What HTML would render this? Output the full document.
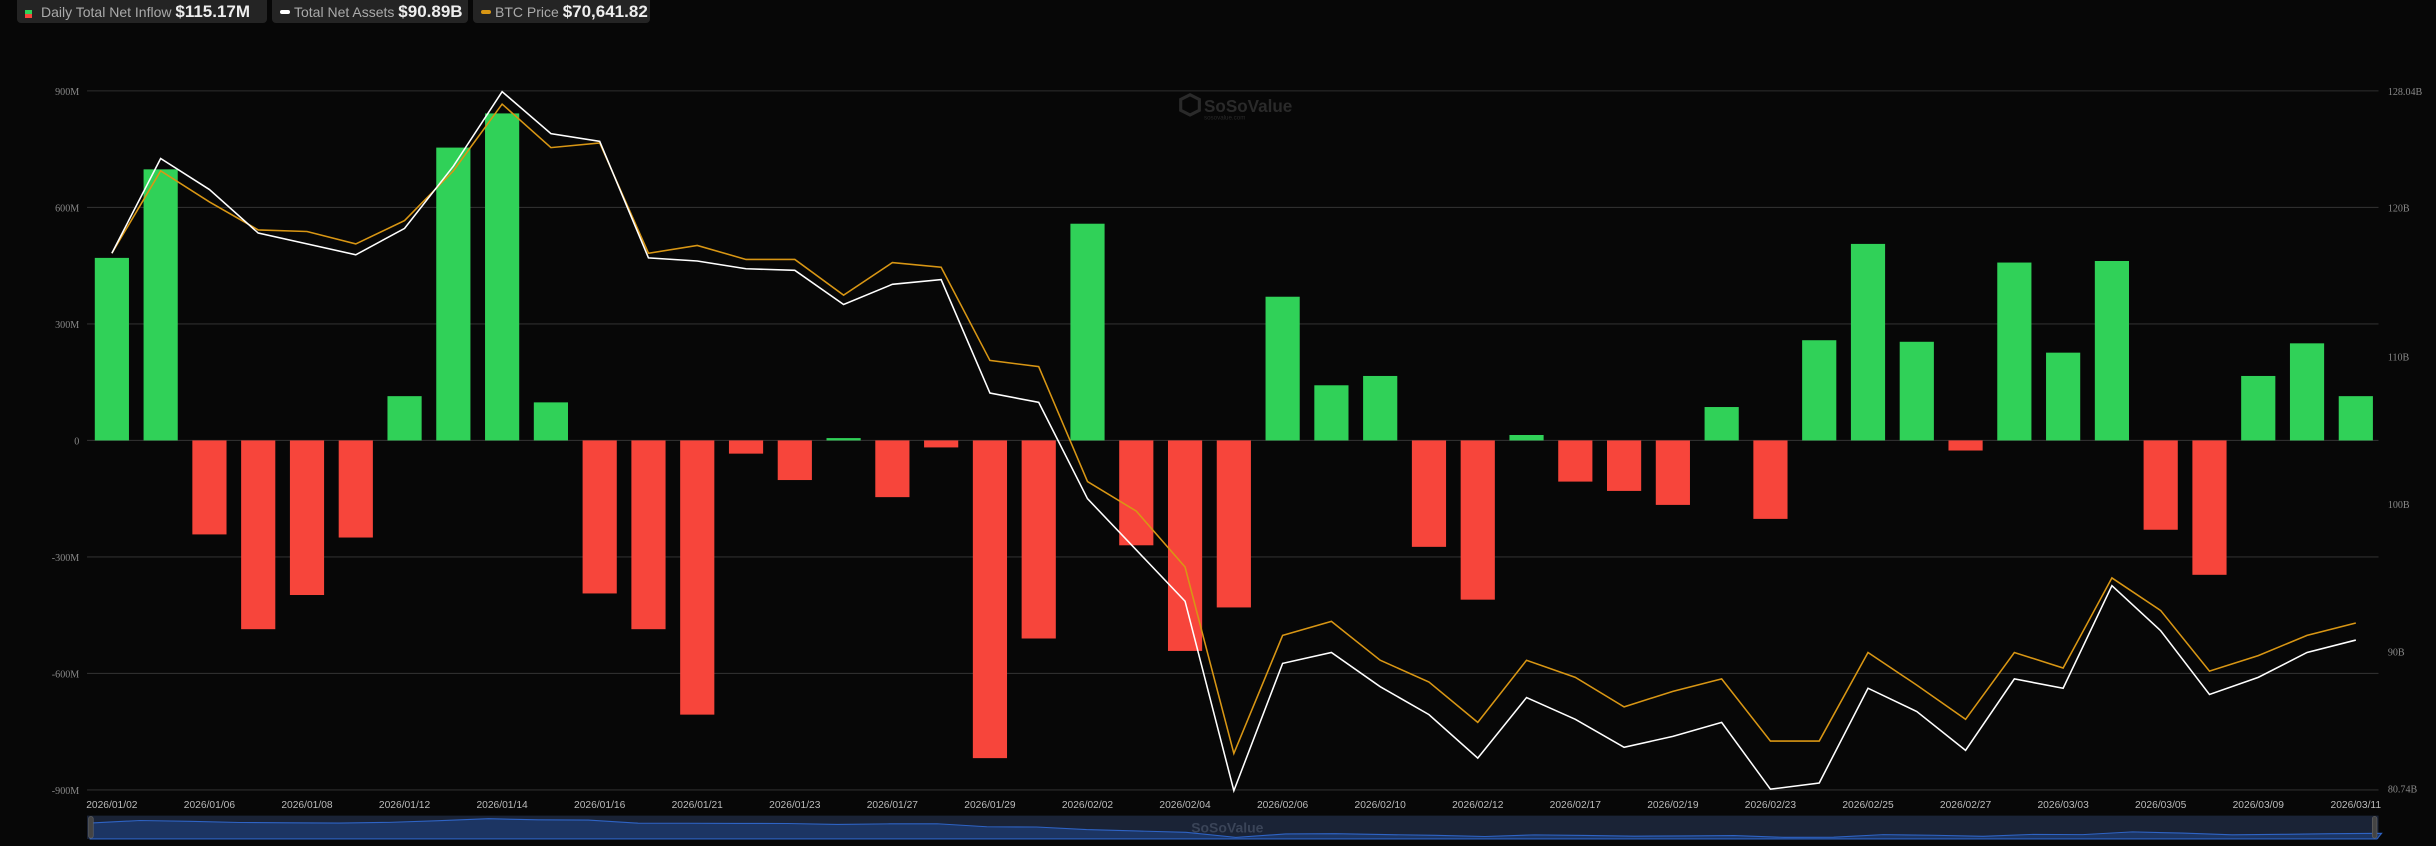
<!DOCTYPE html>
<html><head><meta charset="utf-8"><style>
html,body{margin:0;padding:0;background:#070707;width:2436px;height:846px;overflow:hidden;font-family:"Liberation Sans",sans-serif}
.chip{position:absolute;top:0;height:23px;background:#242424;border-radius:0 0 4px 4px;color:#aaa;font-size:14px;line-height:23px;white-space:nowrap;padding-left:8px;box-sizing:border-box}
.chip b{color:#eee;font-size:17px;font-weight:bold}
svg{position:absolute;left:0;top:0}
</style></head><body>
<div class="chip" style="left:17px;width:250px"><span style="display:inline-block;width:7px;height:8px;vertical-align:-1px;background:linear-gradient(#30d158 50%,#f7453b 50%);margin-right:9px"></span>Daily Total Net Inflow <b>$115.17M</b></div>
<div class="chip" style="left:272px;width:196px"><span style="display:inline-block;width:10px;height:4px;border-radius:2px;background:#fff;vertical-align:3px;margin-right:4px"></span>Total Net Assets <b>$90.89B</b></div>
<div class="chip" style="left:473px;width:177px"><span style="display:inline-block;width:10px;height:4px;border-radius:2px;background:#d89614;vertical-align:3px;margin-right:4px"></span>BTC Price <b>$70,641.82</b></div>
<svg id="s" width="2436" height="846" viewBox="0 0 1568 544.56">
<g stroke="#2e2e2e" stroke-width="0.7">
<line x1="56" x2="1531" y1="58.5" y2="58.5"/><line x1="56" x2="1531" y1="133.5" y2="133.5"/><line x1="56" x2="1531" y1="208.5" y2="208.5"/><line x1="56" x2="1531" y1="283.5" y2="283.5"/><line x1="56" x2="1531" y1="358.5" y2="358.5"/><line x1="56" x2="1531" y1="433.5" y2="433.5"/><line x1="56" x2="1531" y1="508.5" y2="508.5"/>
</g>
<g font-family="Liberation Serif,serif" font-size="6.5" fill="#888" text-anchor="end">
<text x="51" y="61">900M</text><text x="51" y="136">600M</text><text x="51" y="211">300M</text><text x="51" y="286">0</text><text x="51" y="361">-300M</text><text x="51" y="436">-600M</text><text x="51" y="511">-900M</text>
</g>
<g font-family="Liberation Serif,serif" font-size="6.5" fill="#888">
<text x="1537" y="61">128.04B</text><text x="1537" y="136">120B</text><text x="1537" y="232">110B</text><text x="1537" y="327">100B</text><text x="1537" y="422">90B</text><text x="1537" y="510">80.74B</text>
</g>
<g fill="#2a2a2a" font-family="Liberation Sans,sans-serif" font-weight="bold">
<polygon points="760,64 766,61 772,64 772,71 766,74 760,71" fill="none" stroke="#2a2a2a" stroke-width="2"/>
<text x="775" y="72" font-size="11">SoSoValue</text>
<text x="775" y="77" font-size="4" font-weight="normal">sosovalue.com</text>
</g>
<g id="bars"></g>
<polyline id="ol" fill="none" stroke="#d89614" stroke-width="1"/>
<polyline id="wl" fill="none" stroke="#fff" stroke-width="1"/>
<g font-family="Liberation Sans,sans-serif" font-size="6.6" fill="#bbb" text-anchor="middle">
<text x="72" y="520">2026/01/02</text><text x="134.8" y="520">2026/01/06</text><text x="197.6" y="520">2026/01/08</text><text x="260.4" y="520">2026/01/12</text><text x="323.2" y="520">2026/01/14</text><text x="386" y="520">2026/01/16</text><text x="448.8" y="520">2026/01/21</text><text x="511.6" y="520">2026/01/23</text><text x="574.4" y="520">2026/01/27</text><text x="637.2" y="520">2026/01/29</text><text x="700" y="520">2026/02/02</text><text x="762.8" y="520">2026/02/04</text><text x="825.6" y="520">2026/02/06</text><text x="888.4" y="520">2026/02/10</text><text x="951.2" y="520">2026/02/12</text><text x="1014" y="520">2026/02/17</text><text x="1076.8" y="520">2026/02/19</text><text x="1139.6" y="520">2026/02/23</text><text x="1202.4" y="520">2026/02/25</text><text x="1265.2" y="520">2026/02/27</text><text x="1328" y="520">2026/03/03</text><text x="1390.8" y="520">2026/03/05</text><text x="1453.6" y="520">2026/03/09</text><text x="1516.4" y="520">2026/03/11</text>
</g>
<rect x="56" y="525" width="1475" height="15" fill="#1a2336"/>
<path id="nav" fill="#1c3563" stroke="#2e63c4" stroke-width="0.7"/>
<rect x="57" y="525.5" width="3" height="14" rx="1.5" fill="#444" stroke="#666" stroke-width="0.4"/>
<rect x="1527" y="525.5" width="3" height="14" rx="1.5" fill="#444" stroke="#666" stroke-width="0.4"/>
<text x="790" y="536" font-family="Liberation Sans,sans-serif" font-weight="bold" font-size="9" fill="#3a4458" text-anchor="middle">SoSoValue</text>
</svg>
<script>
var v=[117.5,174.5,-60.5,-121.5,-99.5,-62.5,28.5,188.5,210.5,24.5,-98.5,-121.5,-176.5,-8.5,-25.5,1.5,-36.5,-4.5,-204.5,-127.5,139.5,-67.5,-135.5,-107.5,92.5,35.5,41.5,-68.5,-102.5,3.5,-26.5,-32.5,-41.5,21.5,-50.5,64.5,126.5,63.5,-6.5,114.5,56.5,115.5,-57.5,-86.5,41.5,62.5,28.5];
var w=[163,102,122,150,157,164,147,107,59,86,91,166,168,173,174,196,183,180,253,259,321,354,387,509,427,420,442,460,488,449,463,481,474,465,508,504,443,458,483,437,443,377,406,447,436,420,412];
var o=[163,110,130,148,149,157,142,110,67,95,92,163,158,167,167,190,169,172,232,236,310,329,365,485,409,400,425,439,465,425,436,455,445,437,477,477,420,441,463,420,430,372,393,432,422,409,401];
var ns="http://www.w3.org/2000/svg",g=document.getElementById('bars'),wp=[],op=[],np=[];
for(var i=0;i<47;i++){var c=72+31.4*i,r=document.createElementNS(ns,'rect');
r.setAttribute('x',c-11);r.setAttribute('width',22);
r.setAttribute('y',v[i]>0?283.5-v[i]:283.5);r.setAttribute('height',Math.abs(v[i]));
r.setAttribute('fill',v[i]>0?'#30d158':'#f7453b');g.appendChild(r);
wp.push(c+','+w[i]);op.push(c+','+o[i]);
var nx=56+(c-72)*(1475/1444.4)+2;np.push(nx+','+(527+(w[i]-59)/450*12));}
document.getElementById('wl').setAttribute('points',wp.join(' '));
document.getElementById('ol').setAttribute('points',op.join(' '));
document.getElementById('nav').setAttribute('d','M58,540 L'+np.join(' L')+' L1530,540 Z');
</script>
</body></html>
